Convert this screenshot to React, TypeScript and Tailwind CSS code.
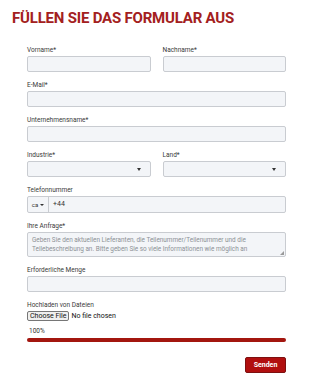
import { ChangeEvent, useState } from "react";

function Label({ children }: { children: React.ReactNode }) {
  return <label className="block text-[6.5px] leading-[8px] text-[#3a3a3a] mb-[2px]">{children}</label>;
}

const field = "block w-full h-[16px] rounded-[2px] border border-[#c9ccd1] bg-[#f3f5f8]";

function SelectBox() {
  return (
    <div className={`${field} flex items-center justify-end pr-[9px]`}>
      <span className="w-0 h-0 border-l-[2.5px] border-r-[2.5px] border-t-[3px] border-l-transparent border-r-transparent border-t-[#333]" />
    </div>
  );
}

export default function App() {
  const [fileName, setFileName] = useState("");

  const onFile = (e: ChangeEvent<HTMLInputElement>) => {
    setFileName(e.target.files?.[0]?.name ?? "");
  };

  return (
    <div className="w-[309px] h-[380px] bg-white overflow-hidden font-['Roboto','Liberation_Sans',sans-serif]">
      <h1 className="pl-[12px] pt-[9px] text-[15px] leading-[18px] font-bold text-[#a32020] tracking-[-0.2px]">
        FÜLLEN SIE DAS FORMULAR AUS
      </h1>

      <form className="pl-[27px] pr-[23px] pt-[19px] flex flex-col" onSubmit={(e) => e.preventDefault()}>
        <div className="grid grid-cols-2 gap-x-[12px]">
          <div>
            <Label>Vorname*</Label>
            <div className={field} />
          </div>
          <div>
            <Label>Nachname*</Label>
            <div className={field} />
          </div>
        </div>

        <div className="mt-[9px]">
          <Label>E-Mail*</Label>
          <div className={field} />
        </div>

        <div className="mt-[9px]">
          <Label>Unternehmensname*</Label>
          <div className={field} />
        </div>

        <div className="mt-[9px] grid grid-cols-2 gap-x-[12px]">
          <div>
            <Label>Industrie*</Label>
            <SelectBox />
          </div>
          <div>
            <Label>Land*</Label>
            <SelectBox />
          </div>
        </div>

        <div className="mt-[9px]">
          <Label>Telefonnummer</Label>
          <div className={`${field} flex items-center !h-[17px]`}>
            <div className="h-full w-[21px] border-r border-[#c9ccd1] flex items-center justify-center gap-[2px]">
              <span className="text-[6px] leading-[6px] text-[#333]">ca</span>
              <span className="w-0 h-0 border-l-[2px] border-r-[2px] border-t-[2.5px] border-l-transparent border-r-transparent border-t-[#333]" />
            </div>
            <span className="pl-[4px] text-[7px] text-[#333]">+44</span>
          </div>
        </div>

        <div className="mt-[9px]">
          <Label>Ihre Anfrage*</Label>
          <div className="relative h-[25px] rounded-[2px] border border-[#c9ccd1] bg-[#f3f5f8] px-[4px] pt-[3px] text-[6.4px] leading-[9px] text-[#8d9196]">
            Geben Sie den aktuellen Lieferanten, die Teilenummer/Teilenummer und die Teilebeschreibung an. Bitte geben Sie so viele Informationen wie möglich an
            <span className="absolute right-[1px] bottom-[1px] w-0 h-0 border-l-[4px] border-b-[4px] border-l-transparent border-b-[#9a9a9a]" />
          </div>
        </div>

        <div className="mt-[9px]">
          <Label>Erforderliche Menge</Label>
          <div className={field} />
        </div>

        <div className="mt-[9px]">
          <Label>Hochladen von Dateien</Label>
          <label className="flex items-center gap-[2px] h-[10px] text-[7px] text-[#111]">
            <span className="border border-[#767676] bg-[#efefef] rounded-[2px] px-[2px] leading-[8px]">Choose File</span>
            <span>{fileName || "No file chosen"}</span>
            <input type="file" className="hidden" onChange={onFile} />
          </label>
        </div>

        <div className="mt-[6px] text-[6.5px] leading-[8px] text-[#333] pl-[2px]">100%</div>
        <div className="mt-[3px] h-[4px] rounded-full bg-[#a3160f]" />

        <div className="mt-[15px] flex justify-end">
          <button type="submit" className="h-[16px] w-[41px] rounded-[2px] border border-[#7d1010] bg-[#b10f0f] text-white text-[7px] font-bold">
            Senden
          </button>
        </div>
      </form>
    </div>
  );
}
